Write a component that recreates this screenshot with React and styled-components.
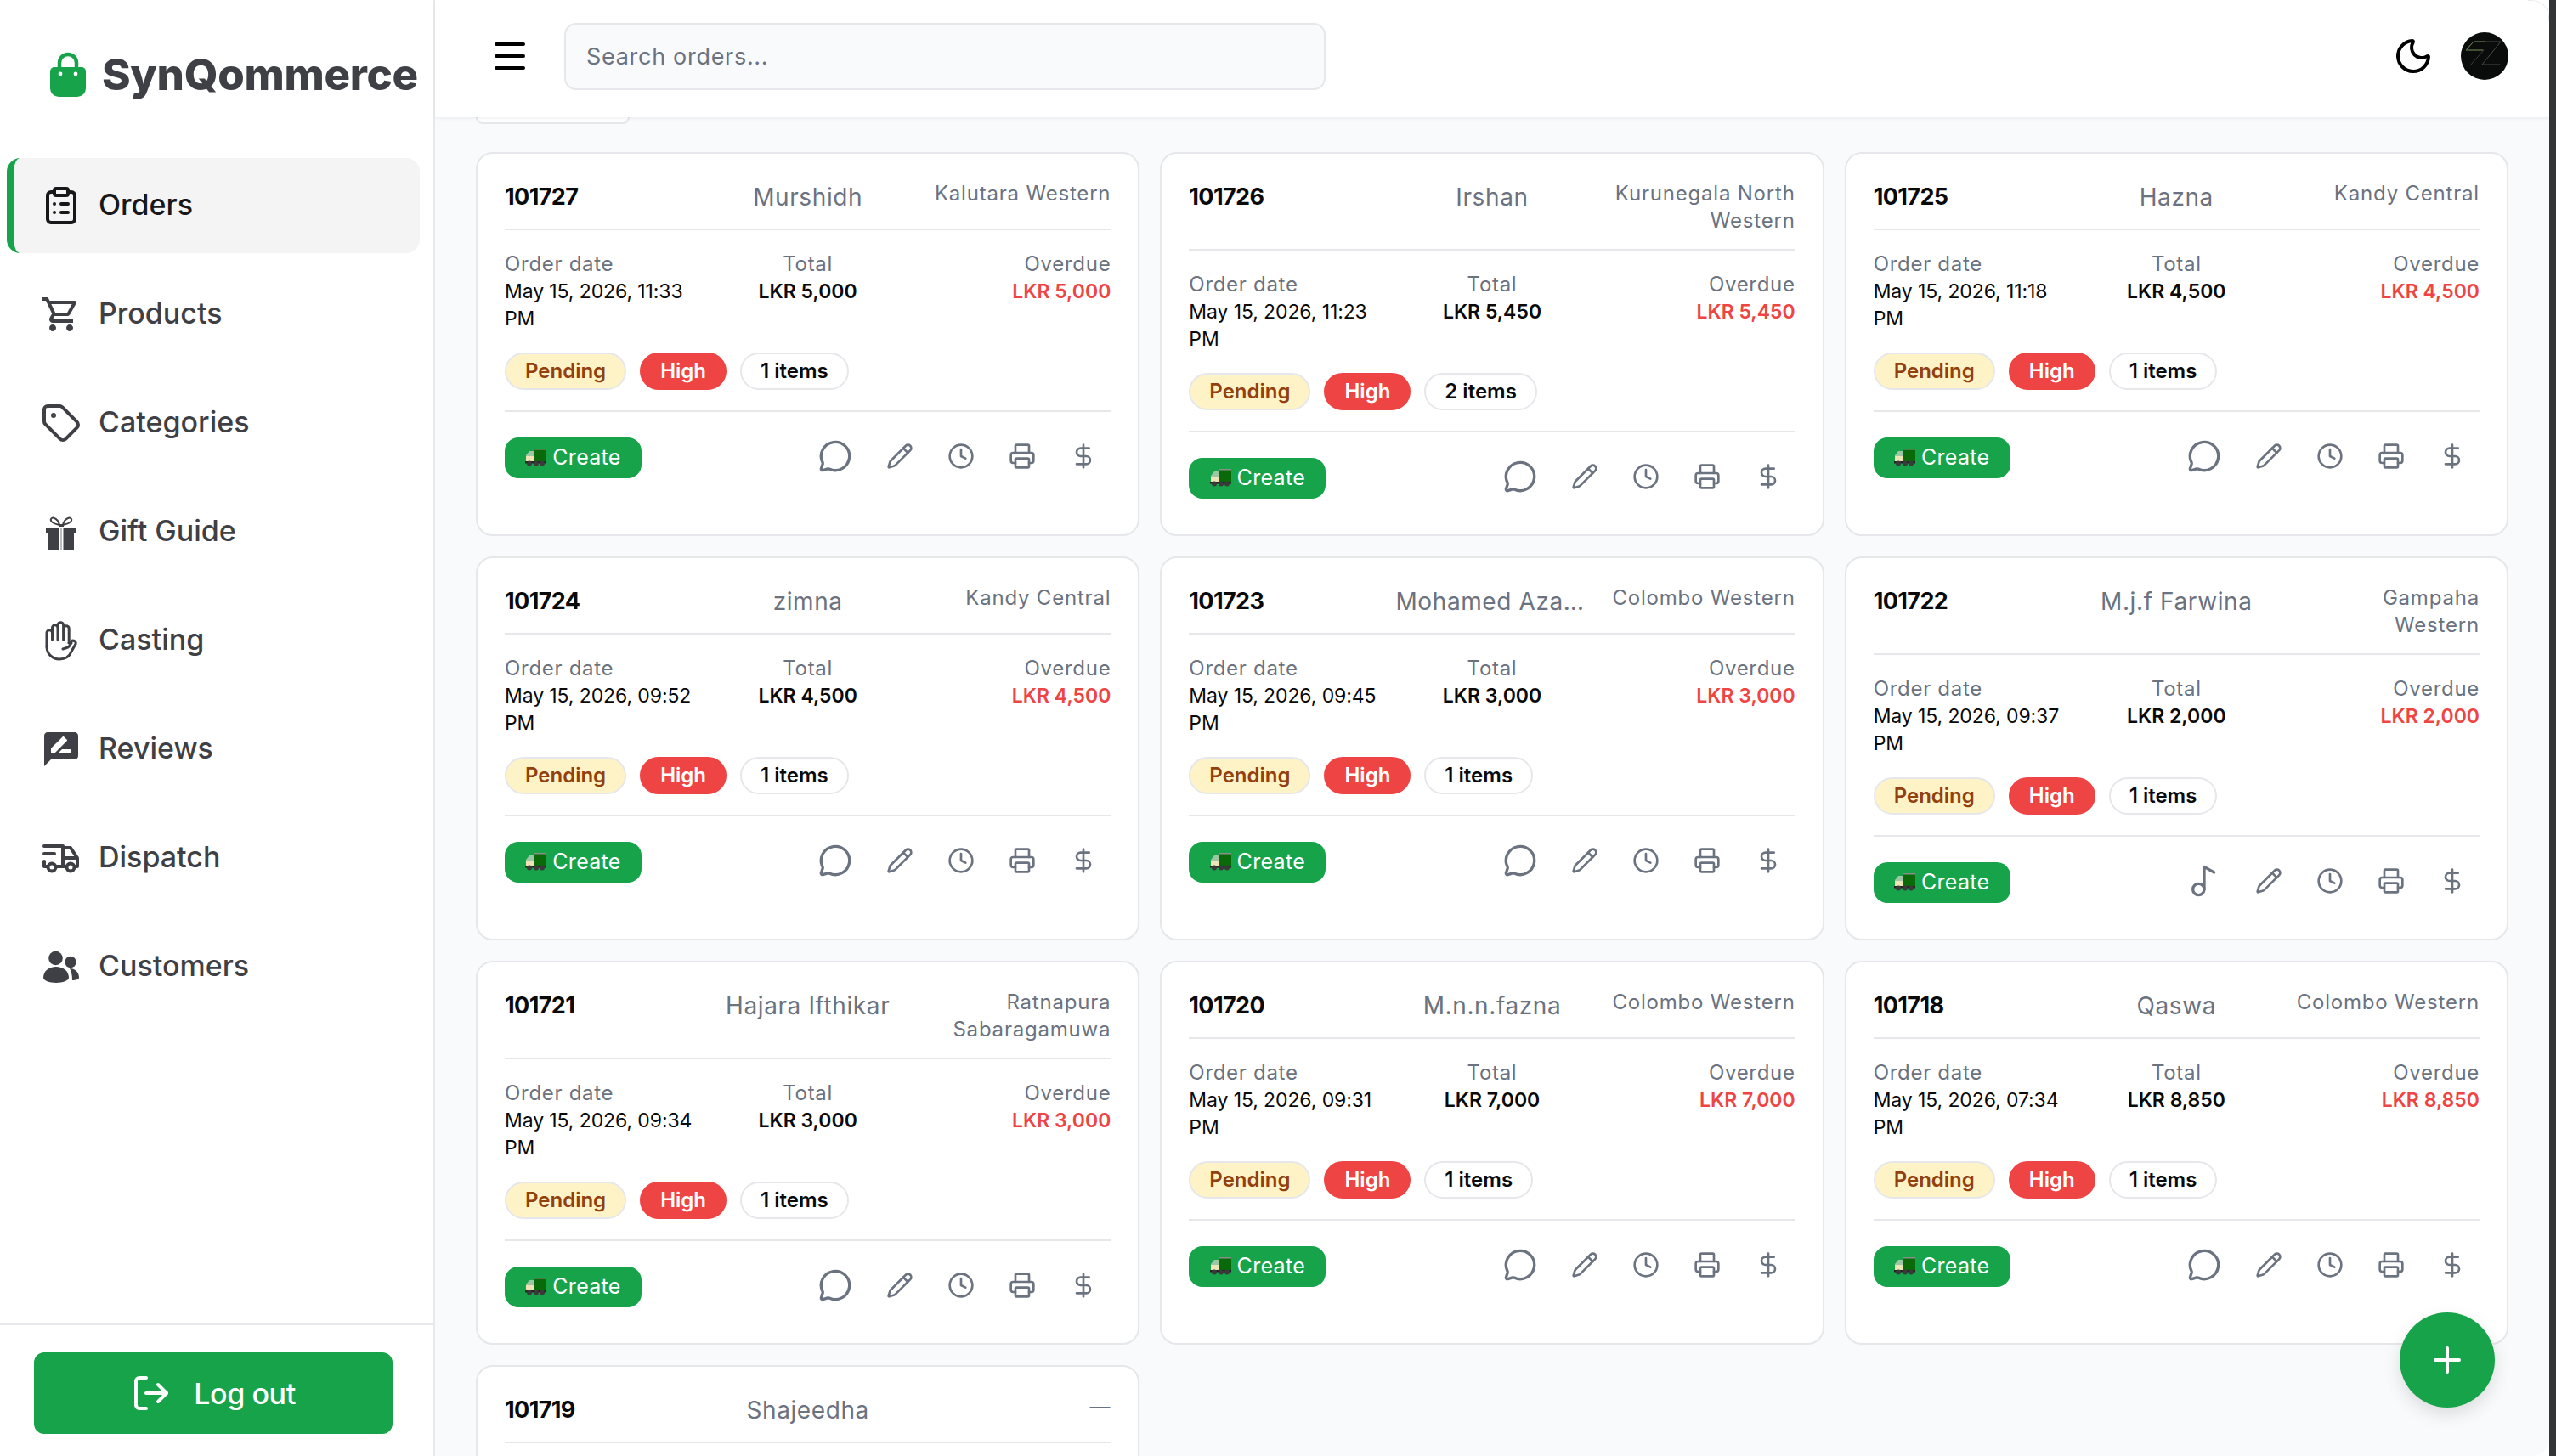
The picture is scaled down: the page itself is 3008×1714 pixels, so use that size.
import React from "react";
import styled, { createGlobalStyle } from "styled-components";
import {
  ClipboardList,
  Tag,
  LogOut,
  Menu,
  Moon,
  MessageCircle,
  Music2,
  Pencil,
  Clock,
  Printer,
  DollarSign,
  Plus,
} from "lucide-react";
import { MdOutlineShoppingCart, MdRateReview } from "react-icons/md";

const GlobalStyle = createGlobalStyle`
  html, body {
    margin: 0;
    height: 100%;
    background: #fff;
    overflow: hidden;
  }
  * {
    box-sizing: border-box;
  }
  body {
    font-family: "Inter", "Liberation Sans", sans-serif;
  }
`;

const Frame = styled.div`
  display: flex;
  width: 3008px;
  height: 1714px;
  overflow: hidden;
`;

const Strip = styled.div`
  width: 8px;
  flex: none;
  background: #333435;
`;

const Shell = styled.div`
  flex: 1;
  min-width: 0;
  display: flex;
  border-radius: 20px;
  overflow: hidden;
  position: relative;

  /* thin arc of the window corner */
  &::after {
    content: "";
    position: absolute;
    top: 0;
    right: 0;
    width: 24px;
    height: 24px;
    border-top: 1px solid #e8eaed;
    border-right: 1px solid #e8eaed;
    border-top-right-radius: 20px;
    pointer-events: none;
    z-index: 4;
  }
`;

const Sidebar = styled.aside`
  width: 512px;
  flex: none;
  display: flex;
  flex-direction: column;
  background: #fff;
  border-right: 2px solid #e8e9eb;
`;

const LogoRow = styled.div`
  height: 186px;
  padding: 60px 0 0 56px;
  display: flex;
  align-items: flex-start;
  gap: 16px;
`;

const LogoText = styled.span`
  font-size: 51px;
  font-weight: 800;
  line-height: 56px;
  color: #3f4045;
  letter-spacing: -0.3px;
  white-space: nowrap;
`;

const Nav = styled.nav`
  flex: 1;
  display: flex;
  flex-direction: column;
  gap: 16px;
  padding: 0 16px 0 8px;
`;

const NavItem = styled.a`
  height: 112px;
  display: flex;
  align-items: center;
  gap: 20px;
  padding-left: 32px;
  font-size: 34px;
  font-weight: 500;
  letter-spacing: 0;
  line-height: 44px;
  border-left: 8px solid ${(p) => (p.$active ? "#16a34a" : "transparent")};
  border-radius: 16px;
  background: ${(p) => (p.$active ? "#f4f4f5" : "transparent")};
  color: ${(p) => (p.$active ? "#18181b" : "#3f3f46")};
  svg {
    flex: none;
  }
`;

const NavLabel = styled.span`
  margin-top: -3px;
`;

const SideFooter = styled.div`
  border-top: 2px solid #e5e7eb;
  padding: 32px 48px 26px 40px;
`;

const LogoutButton = styled.button`
  width: 100%;
  height: 96px;
  border: 0;
  border-radius: 12px;
  background: #16a34a;
  color: #fff;
  display: flex;
  align-items: center;
  justify-content: center;
  gap: 26px;
  font-family: inherit;
  font-size: 34px;
  font-weight: 500;
  letter-spacing: -0.4px;
`;

const Content = styled.div`
  flex: 1;
  min-width: 0;
  display: flex;
  flex-direction: column;
  background: #f9fafb;
  position: relative;
`;

const Topbar = styled.header`
  height: 138px;
  flex: none;
  display: flex;
  align-items: center;
  padding: 0 48px 6px 64px;
  background: #fff;
  box-shadow: 0 2px 3px rgba(0, 0, 0, 0.05);
  position: relative;
  z-index: 2;
`;

const MenuButton = styled.div`
  display: flex;
  color: #000;
  margin-right: 40px;
`;

const Search = styled.div`
  width: 896px;
  height: 79px;
  display: flex;
  align-items: center;
  padding-left: 24px;
  background: #f9fafb;
  border: 2px solid #e5e7eb;
  border-radius: 14px;
  font-size: 27px;
  color: #6b7280;
  letter-spacing: 0.7px;
`;

const TopRight = styled.div`
  margin-left: auto;
  display: flex;
  align-items: center;
  gap: 32px;
  color: #000;
`;

const Avatar = styled.div`
  width: 56px;
  height: 56px;
  border-radius: 50%;
  background: #0a0b0b;
  overflow: hidden;
  display: flex;
`;

const Scroll = styled.main`
  flex: 1;
  min-height: 0;
  overflow: hidden;
  padding: 0 48px;
`;

const FilterPeek = styled.div`
  width: 181px;
  height: 8px;
  background: #fff;
  border: 2px solid #e5e7eb;
  border-top: 0;
  border-radius: 0 0 12px 12px;
  margin-bottom: 33px;
`;

const Grid = styled.div`
  display: grid;
  grid-template-columns: repeat(3, 1fr);
  gap: 24px;
`;

const Card = styled.article`
  min-height: 452px;
  background: #fff;
  border: 2px solid #e5e7eb;
  border-radius: 20px;
  padding: 31px 32px 0;
`;

const CardHead = styled.div`
  display: grid;
  grid-template-columns: 1fr 1fr 1fr;
  gap: 16px;
  align-items: start;
  padding-bottom: 17px;
  border-bottom: 2px solid #e5e7eb;
`;

const OrderId = styled.span`
  font-size: 27px;
  font-weight: 700;
  line-height: 40px;
  letter-spacing: -0.6px;
  color: #0a0a0a;
`;

const Customer = styled.span`
  font-size: 28px;
  line-height: 40px;
  color: #6b7280;
  text-align: center;
  white-space: nowrap;
  overflow: hidden;
  text-overflow: ellipsis;
  letter-spacing: 0.6px;
`;

const City = styled.span`
  font-size: 24px;
  line-height: 32px;
  color: #6b7280;
  text-align: right;
  white-space: pre;
  letter-spacing: 0.8px;
`;

const Details = styled.div`
  display: grid;
  grid-template-columns: 1fr 1fr 1fr;
  gap: 16px;
  margin-top: 24px;
`;

const DetailCol = styled.div`
  text-align: ${(p) => p.$align || "left"};
  font-size: 23px;
  line-height: 32px;
`;

const DetailLabel = styled.div`
  color: #6b7280;
  font-size: 24px;
  letter-spacing: 0.7px;
`;

const DateValue = styled.div`
  color: #0a0a0a;
  white-space: pre;
  letter-spacing: -0.1px;
`;

const Amount = styled.div`
  font-weight: 600;
  letter-spacing: 0;
  color: ${(p) => (p.$overdue ? "#ef4444" : "#0a0a0a")};
`;

const Badges = styled.div`
  display: flex;
  gap: 16px;
  margin-top: 24px;
  padding-bottom: 24px;
  border-bottom: 2px solid #e5e7eb;
`;

const Badge = styled.span`
  height: 44px;
  display: inline-flex;
  align-items: center;
  padding: 0 22px 2px;
  border-radius: 22px;
  border: 2px solid ${(p) => p.$border || "#e5e7eb"};
  background: ${(p) => p.$bg || "#fff"};
  color: ${(p) => p.$fg || "#0a0a0a"};
  font-size: 24px;
  font-weight: 600;
`;

const CardFoot = styled.div`
  display: flex;
  align-items: center;
  justify-content: space-between;
  margin-top: 16px;
`;

const CreateButton = styled.button`
  width: 161px;
  height: 48px;
  margin-top: 4px;
  padding: 0 0 2px;
  border: 0;
  border-radius: 16px;
  background: #16a34a;
  color: #fff;
  display: flex;
  align-items: center;
  justify-content: center;
  gap: 6px;
  font-family: inherit;
  font-size: 25px;
  font-weight: 400;
  letter-spacing: 0.3px;
`;

const Actions = styled.div`
  display: flex;
  align-items: center;
  gap: 8px;
`;

const ActionButton = styled.span`
  width: ${(p) => (p.$large ? 72 : 64)}px;
  height: ${(p) => (p.$large ? 72 : 64)}px;
  display: flex;
  align-items: center;
  justify-content: center;
  color: #6b7280;
`;

const Fab = styled.button`
  position: absolute;
  right: 64px;
  bottom: 57px;
  width: 112px;
  height: 112px;
  border: 0;
  border-radius: 50%;
  background: #16a34a;
  color: #fff;
  display: flex;
  align-items: center;
  justify-content: center;
  box-shadow: 0 8px 20px rgba(0, 0, 0, 0.12);
  z-index: 3;
`;

const BagIcon = () => (
  <svg width="48" height="56" viewBox="0 0 48 56" fill="none">
    <path d="M14 20v-6a10 10 0 0 1 20 0v6" stroke="#16a34a" strokeWidth="4.5" />
    <path
      d="M8 19h32a5 5 0 0 1 5 5v20a10 10 0 0 1-10 10H13A10 10 0 0 1 3 44V24a5 5 0 0 1 5-5z"
      fill="#16a34a"
    />
    <circle cx="15" cy="27" r="2.4" fill="#fff" />
    <circle cx="33" cy="27" r="2.4" fill="#fff" />
  </svg>
);

const HandIcon = () => (
  <svg
    width="48"
    height="48"
    viewBox="0 0 48 48"
    fill="none"
    stroke="#3f3f46"
    strokeWidth="3"
    strokeLinecap="round"
    strokeLinejoin="round"
  >
    <path d="M13.5 23V9a3.2 3.2 0 0 1 6.5 0v14M20 23V6a3.3 3.3 0 0 1 6.6 0v17M26.6 23V10a3.3 3.3 0 0 1 6.6 0v16" />
    <path d="M7 31V15a3.25 3.25 0 0 1 6.5 0" />
    <path d="M7 31c0 9 7 15 15 15s12-4 14-9l5-9c1-3-3-5-5-3l-3 2" />
    <path d="M26 34l6-2c2-1 2-3 4-5" />
  </svg>
);

const GiftIcon = () => (
  <svg width="48" height="48" viewBox="0 0 48 48" fill="#3f3f46">
    <path
      d="M22 16c-4-1-9-2-10-5-1-3 2-4 4-3 3 1 5 4 6 8zM26 16c4-1 9-2 10-5 1-3-2-4-4-3-3 1-5 4-6 8z"
      fill="none"
      stroke="#3f3f46"
      strokeWidth="2"
    />
    <rect x="21" y="15" width="6" height="3" />
    <rect x="6" y="19" width="15.5" height="6" />
    <rect x="26.5" y="19" width="14.5" height="6" />
    <rect x="9" y="26" width="12.5" height="20" />
    <rect x="26.5" y="26" width="12.5" height="20" />
    <rect x="23" y="19" width="2" height="27" opacity="0.35" />
  </svg>
);

const DispatchIcon = () => (
  <svg
    width="48"
    height="48"
    viewBox="0 0 48 48"
    fill="none"
    stroke="#3f3f46"
    strokeWidth="4"
    strokeLinecap="round"
    strokeLinejoin="round"
  >
    <path d="M4 10h22v24M26 12h9l8 12v10h-3M27 24h16M4 19h12M4 28v6h4M18 34h12" />
    <circle cx="13" cy="35" r="4.5" />
    <circle cx="35" cy="35" r="4.5" />
  </svg>
);

const CustomersIcon = () => (
  <svg width="48" height="48" viewBox="0 0 48 48" fill="#3f3f46">
    <circle cx="17.5" cy="14" r="8.3" />
    <circle cx="35" cy="18.5" r="6.7" />
    <path d="M3 37c0-8 7-13 15-13s15 5 15 13c0 3-7 6-15 6S3 40 3 37z" />
    <path d="M34 26c6 0 11 4 11 11 0 2-4 3-8 3 0-6-1-10-3-14z" />
  </svg>
);

// the lorry emoji on the Create button
const LorryIcon = () => (
  <svg width="26" height="22" viewBox="0 0 26 22">
    <rect x="10" y="1" width="15" height="15" fill="#0a6a0a" />
    <rect x="10" y="1" width="15" height="1.5" fill="#8a8f8a" />
    <path d="M1 16V9l4-5h5v12z" fill="#9dc6a6" />
    <rect x="1" y="10" width="9" height="6" fill="#efe3b8" />
    <rect x="0" y="16" width="25" height="2.5" fill="#222" />
    <circle cx="5" cy="18.5" r="3" fill="#3a3a3a" />
    <circle cx="13" cy="18.5" r="3" fill="#3a3a3a" />
    <circle cx="20" cy="18.5" r="3" fill="#3a3a3a" />
  </svg>
);

const AvatarLogo = () => (
  <svg width="56" height="56" viewBox="0 0 56 56" fill="none" strokeWidth="0.8">
    <path d="M6 21L15 11h32L25 38h21" stroke="#5a5a5a" />
    <path d="M6 21h21L11 39" stroke="#4a4a4a" />
    <path d="M6 21h20M7 20l8-9h14" stroke="#6f8f4a" />
  </svg>
);

const navItems = [
  { label: "Orders", icon: <ClipboardList size={48} strokeWidth={2} />, active: true },
  { label: "Products", icon: <MdOutlineShoppingCart size={48} /> },
  { label: "Categories", icon: <Tag size={48} strokeWidth={2} /> },
  { label: "Gift Guide", icon: <GiftIcon /> },
  { label: "Casting", icon: <HandIcon /> },
  { label: "Reviews", icon: <MdRateReview size={48} /> },
  { label: "Dispatch", icon: <DispatchIcon /> },
  { label: "Customers", icon: <CustomersIcon /> },
];

const orders = [
  { id: "101727", name: "Murshidh", city: "Kalutara Western", date: "May 15, 2026, 11:33\nPM", total: "5,000" },
  { id: "101726", name: "Irshan", city: "Kurunegala North\nWestern", date: "May 15, 2026, 11:23\nPM", total: "5,450", items: 2 },
  { id: "101725", name: "Hazna", city: "Kandy Central", date: "May 15, 2026, 11:18\nPM", total: "4,500" },
  { id: "101724", name: "zimna", city: "Kandy Central", date: "May 15, 2026, 09:52\nPM", total: "4,500" },
  { id: "101723", name: "Mohamed Azanath", city: "Colombo Western", date: "May 15, 2026, 09:45\nPM", total: "3,000" },
  { id: "101722", name: "M.j.f Farwina", city: "Gampaha\nWestern", date: "May 15, 2026, 09:37\nPM", total: "2,000", music: true },
  { id: "101721", name: "Hajara Ifthikar", city: "Ratnapura\nSabaragamuwa", date: "May 15, 2026, 09:34\nPM", total: "3,000" },
  { id: "101720", name: "M.n.n.fazna", city: "Colombo Western", date: "May 15, 2026, 09:31\nPM", total: "7,000" },
  { id: "101718", name: "Qaswa", city: "Colombo Western", date: "May 15, 2026, 07:34\nPM", total: "8,850" },
];

const OrderCard = ({ order }) => (
  <Card>
    <CardHead>
      <OrderId>{order.id}</OrderId>
      <Customer>{order.name}</Customer>
      <City>{order.city}</City>
    </CardHead>
    <Details>
      <DetailCol>
        <DetailLabel>Order date</DetailLabel>
        <DateValue>{order.date}</DateValue>
      </DetailCol>
      <DetailCol $align="center">
        <DetailLabel>Total</DetailLabel>
        <Amount>LKR {order.total}</Amount>
      </DetailCol>
      <DetailCol $align="right">
        <DetailLabel>Overdue</DetailLabel>
        <Amount $overdue>LKR {order.total}</Amount>
      </DetailCol>
    </Details>
    <Badges>
      <Badge $bg="#fef3c7" $fg="#92400e">Pending</Badge>
      <Badge $bg="#ef4444" $fg="#fff" $border="#ef4444">High</Badge>
      <Badge>{order.items || 1} items</Badge>
    </Badges>
    <CardFoot>
      <CreateButton>
        <LorryIcon />
        Create
      </CreateButton>
      <Actions>
        <ActionButton $large>
          {order.music ? <Music2 size={40} /> : <MessageCircle size={40} />}
        </ActionButton>
        <ActionButton><Pencil size={32} /></ActionButton>
        <ActionButton><Clock size={32} /></ActionButton>
        <ActionButton><Printer size={32} /></ActionButton>
        <ActionButton><DollarSign size={32} /></ActionButton>
      </Actions>
    </CardFoot>
  </Card>
);

export default function App() {
  return (
    <Frame>
      <GlobalStyle />
      <Shell>
        <Sidebar>
          <LogoRow>
            <BagIcon />
            <LogoText>SynQommerce</LogoText>
          </LogoRow>
          <Nav>
            {navItems.map((item) => (
              <NavItem key={item.label} $active={item.active}>
                {item.icon}
                <NavLabel>{item.label}</NavLabel>
              </NavItem>
            ))}
          </Nav>
          <SideFooter>
            <LogoutButton>
              <LogOut size={48} strokeWidth={2} />
              Log out
            </LogoutButton>
          </SideFooter>
        </Sidebar>
        <Content>
          <Topbar>
            <MenuButton><Menu size={48} strokeWidth={2} /></MenuButton>
            <Search>Search orders...</Search>
            <TopRight>
              <Moon size={48} strokeWidth={2} />
              <Avatar><AvatarLogo /></Avatar>
            </TopRight>
          </Topbar>
          <Scroll>
            <FilterPeek />
            <Grid>
              {orders.map((order) => (
                <OrderCard key={order.id} order={order} />
              ))}
              <Card>
                <CardHead>
                  <OrderId>101719</OrderId>
                  <Customer>Shajeedha</Customer>
                  <City>—</City>
                </CardHead>
              </Card>
            </Grid>
          </Scroll>
          <Fab><Plus size={48} strokeWidth={2} /></Fab>
        </Content>
      </Shell>
      <Strip />
    </Frame>
  );
}
